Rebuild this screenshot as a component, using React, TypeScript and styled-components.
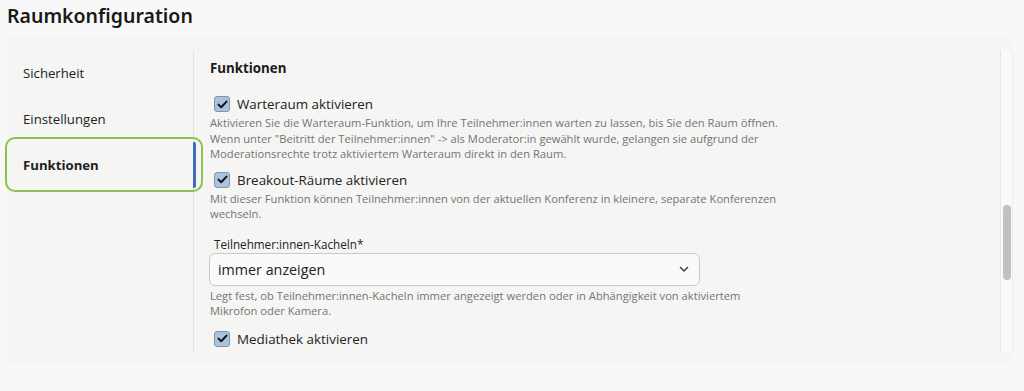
import React from "react";
import styled, { createGlobalStyle } from "styled-components";

const Global = createGlobalStyle`
  html, body { margin: 0; padding: 0; background: #f8f8f8; }
  body { font-family: "Open Sans", "Noto Sans", sans-serif; color: #1d1d1d; }
  * { box-sizing: border-box; }
`;

const Page = styled.div`
  width: 1024px;
  height: 391px;
  overflow: hidden;
  background: #f8f8f8;
`;

const Title = styled.h1`
  margin: 0;
  height: 37px;
  padding: 2px 0 0 7px;
  font-family: "Noto Sans", sans-serif;
  font-size: 19.5px;
  font-weight: 600;
  line-height: 28px;
  color: #1a1a1a;
`;

const Card = styled.div`
  margin-left: 7px;
  width: 1005px;
  height: 328px;
  background: #f5f5f4;
  border-radius: 8px;
  padding: 13px 0;
  display: flex;
`;

const Sidebar = styled.nav`
  width: 187px;
  flex: none;
  border-right: 1px solid #e2e2e2;
  display: flex;
  flex-direction: column;
`;

const NavItem = styled.div<{ $active?: boolean }>`
  position: relative;
  height: 46px;
  margin-right: ${(p) => (p.$active ? "-3px" : "0")};
  padding-left: 16px;
  display: flex;
  align-items: center;
  font-size: 13.2px;
  font-weight: ${(p) => (p.$active ? 700 : 400)};
  color: #222;
  border-right: ${(p) => (p.$active ? "3px solid #3f6fb5" : "none")};
  border-radius: 2px;
  &::after {
    content: "";
    display: ${(p) => (p.$active ? "block" : "none")};
    position: absolute;
    top: -5px;
    bottom: -4px;
    left: -2px;
    right: -10px;
    border: 2px solid #8cc152;
    border-radius: 10px;
    pointer-events: none;
  }
`;

const Content = styled.div`
  flex: 1;
  overflow: hidden;
  padding: 8px 0 0 16px;
`;

const SectionTitle = styled.h2`
  margin: 0 0 17px;
  font-size: 13.3px;
  font-weight: 700;
  line-height: 20px;
  color: #1a1a1a;
`;

const CheckRow = styled.label`
  display: flex;
  align-items: center;
  gap: 7px;
  margin-left: 4px;
  height: 18px;
  font-size: 13.4px;
  color: #222;
`;

const Box = styled.span`
  width: 16px;
  height: 16px;
  flex: none;
  border: 1px solid #8594a6;
  border-radius: 3px;
  background: #a9c3de;
  display: flex;
  align-items: center;
  justify-content: center;
`;

const Help = styled.p<{ $mb: number }>`
  margin: 2px 0 ${(p) => p.$mb}px;
  font-size: 11.2px;
  line-height: 15.5px;
  color: #747474;
  white-space: nowrap;
`;

const FieldLabel = styled.div`
  margin-left: 4px;
  font-size: 11.7px;
  line-height: 15px;
  color: #222;
`;

const Select = styled.div`
  margin-top: 1px;
  width: 491px;
  height: 33px;
  margin-left: -1px;
  border: 1px solid #c9c9c9;
  border-radius: 6px;
  background: #fafafa;
  display: flex;
  align-items: center;
  justify-content: space-between;
  padding: 0 10px 0 8px;
  font-size: 14.3px;
  color: #222;
`;

const ScrollTrack = styled.div`
  width: 13px;
  flex: none;
  margin-right: -1px;
  background: #fafafa;
  border-left: 1px solid #e6e6e6;
  border-right: 1px solid #ececec;
  padding: 155px 2px 0 2px;
`;

const Thumb = styled.div`
  width: 8px;
  height: 75px;
  border-radius: 4px;
  background: #c1c1c1;
`;

const Check = () => (
  <Box>
    <svg width="11" height="9" viewBox="0 0 11 9">
      <path d="M1.5 4.6 L4.2 7.2 L9.5 1.6" fill="none" stroke="#111" strokeWidth="2" strokeLinecap="round" strokeLinejoin="round" />
    </svg>
  </Box>
);

const Chevron = () => (
  <svg width="10" height="7" viewBox="0 0 10 7">
    <path d="M1.5 1.5 L5 5 L8.5 1.5" fill="none" stroke="#444" strokeWidth="1.6" strokeLinecap="round" strokeLinejoin="round" />
  </svg>
);

export default function App() {
  return (
    <Page>
      <Global />
      <Title>Raumkonfiguration</Title>
      <Card>
        <Sidebar>
          <NavItem>Sicherheit</NavItem>
          <NavItem>Einstellungen</NavItem>
          <NavItem $active>Funktionen</NavItem>
        </Sidebar>
        <Content>
          <SectionTitle>Funktionen</SectionTitle>
          <CheckRow>
            <Check />
            Warteraum aktivieren
          </CheckRow>
          <Help $mb={9}>
            Aktivieren Sie die Warteraum-Funktion, um Ihre Teilnehmer:innen warten zu lassen, bis Sie den Raum öffnen.
            <br />
            Wenn unter "Beitritt der Teilnehmer:innen" -&gt; als Moderator:in gewählt wurde, gelangen sie aufgrund der
            <br />
            Moderationsrechte trotz aktiviertem Warteraum direkt in den Raum.
          </Help>
          <CheckRow>
            <Check />
            Breakout-Räume aktivieren
          </CheckRow>
          <Help $mb={15}>
            Mit dieser Funktion können Teilnehmer:innen von der aktuellen Konferenz in kleinere, separate Konferenzen
            <br />
            wechseln.
          </Help>
          <FieldLabel>Teilnehmer:innen-Kacheln*</FieldLabel>
          <Select>
            <span>immer anzeigen</span>
            <Chevron />
          </Select>
          <Help $mb={11}>
            Legt fest, ob Teilnehmer:innen-Kacheln immer angezeigt werden oder in Abhängigkeit von aktiviertem
            <br />
            Mikrofon oder Kamera.
          </Help>
          <CheckRow>
            <Check />
            Mediathek aktivieren
          </CheckRow>
        </Content>
        <ScrollTrack>
          <Thumb />
        </ScrollTrack>
      </Card>
    </Page>
  );
}
